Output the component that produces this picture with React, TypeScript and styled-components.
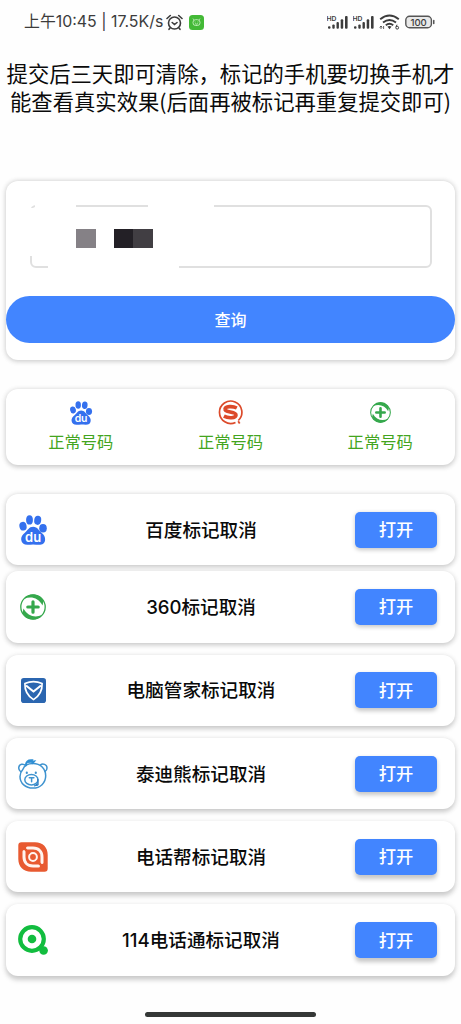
import React from "react";
import styled, { createGlobalStyle } from "styled-components";

const Global = createGlobalStyle`
  * { box-sizing: border-box; }
  body { margin: 0; background: #fefefe; }
  button { font: inherit; border: 0; margin: 0; padding: 0; }
  svg { display: block; flex: none; }
`;

const Page = styled.div`
  height: 1024px;
  display: flex;
  flex-direction: column;
  align-items: stretch;
  padding: 0 6px;
  overflow: hidden;
  background: #fefefe;
  color: #0a0a0a;
  font-family: "Noto Sans CJK SC", sans-serif;
`;

const StatusBar = styled.header`
  height: 44px;
  flex: none;
  display: flex;
  align-items: center;
  padding: 0 20px 0 18px;
  color: #3c3c3c;
`;

const Clock = styled.span`
  width: 142px;
  font-family: Inter, "Noto Sans CJK SC", sans-serif;
  font-size: 15.9px;
  line-height: 20px;
  white-space: nowrap;
`;

const StatusIcons = styled.div`
  display: flex;
  align-items: center;
  gap: 5px;
  margin-left: auto;
`;

const Notice = styled.p`
  flex: none;
  height: 137px;
  margin: 0 -6px;
  padding-top: 15px;
  text-align: center;
  font-size: 21.33px;
  line-height: 27.5px;
  white-space: nowrap;
`;

const Card = styled.section<{ $depth: number }>`
  flex: none;
  background: #fff;
  border-radius: 12px;
  box-shadow: 0 ${(p) => p.$depth}px 5px rgba(0, 0, 0, 0.17), 0 1px 6px rgba(0, 0, 0, 0.08);
`;

const QueryCard = styled(Card)`
  height: 179px;
  padding-top: 24px;
  margin-bottom: 29px;
`;

const NumberField = styled.div`
  position: relative;
  height: 63px;
  margin: 0 23px 28px 24px;
  border: 2px solid #e0e0e0;
  border-radius: 6px;
`;

const Patch = styled.i<{ $x: number; $y: number; $w: number; $h: number; $color?: string }>`
  position: absolute;
  left: ${(p) => p.$x}px;
  top: ${(p) => p.$y}px;
  width: ${(p) => p.$w}px;
  height: ${(p) => p.$h}px;
  background: ${(p) => p.$color ?? "#fff"};
`;

const QueryButton = styled.button`
  display: block;
  width: 100%;
  height: 47px;
  padding-bottom: 2px;
  border-radius: 24px;
  background: #4285ff;
  color: #fff;
  font-size: 16px;
  font-weight: 500;
`;

const ResultCard = styled(Card)`
  height: 76px;
  display: grid;
  grid-template-columns: repeat(3, 1fr);
  margin-bottom: 29px;
`;

const Result = styled.div`
  display: flex;
  flex-direction: column;
  align-items: center;
  padding-top: 11px;
  color: #43a520;
  font-size: 16.3px;
  line-height: 24px;
  gap: 4px;
`;

const List = styled.main`
  display: flex;
  flex-direction: column;
  gap: 12px;
`;

const Row = styled(Card)<{ $tight?: boolean }>`
  height: 71.3px;
  display: grid;
  grid-template-columns: 54px 1fr 82px;
  align-items: center;
  padding-right: 18px;
  margin-bottom: ${(p) => (p.$tight ? "-6px" : "0")};
`;

const IconCell = styled.div`
  display: flex;
  justify-content: center;
`;

const RowTitle = styled.span`
  padding-right: 13px;
  text-align: center;
  font-family: Inter, "Noto Sans CJK SC", sans-serif;
  font-size: 18.6px;
  font-weight: 500;
  line-height: 28px;
  white-space: nowrap;
`;

const OpenButton = styled.button<{ $depth: number }>`
  height: 36px;
  padding-bottom: 2px;
  border-radius: 5px;
  background: #4285ff;
  color: #fff;
  font-size: 17.3px;
  font-weight: 500;
  box-shadow: 0 ${(p) => p.$depth}px 4px rgba(0, 0, 0, 0.22);
`;

const HomeBar = styled.div`
  flex: none;
  width: 171px;
  height: 5px;
  margin: 36.5px auto 0;
  border-radius: 3px;
  background: #353837;
`;

const AlarmIcon = () => (
  <svg width="17" height="17" viewBox="0 0 17 17" fill="none" stroke="#3c3c3c" strokeWidth="1.6" strokeLinecap="round">
    <circle cx="8.5" cy="9" r="6" />
    <path d="M1 4.5 4.3 1.5M16 4.5 12.7 1.5M6.2 8.5l2.3 2 2.5-2M4 14l-1 1.3M13 14l1 1.3" />
  </svg>
);

const BadgeIcon = styled.svg`
  margin-left: 6px;
`;

const AppBadge = () => (
  <BadgeIcon width="15" height="15" viewBox="0 0 15 15">
    <rect width="15" height="15" rx="3.5" fill="#43b936" />
    <g fill="none" stroke="#c6efbe" strokeWidth="0.9">
      <rect x="4" y="4.7" width="7" height="5.8" rx="2.6" />
      <path d="M4.8 4.8 4 3.6M10.2 4.8l.8-1.2M5.7 7h.8M8.5 7h.8M6 8.7q1.5 1 3 0" />
    </g>
  </BadgeIcon>
);

const Signal = () => (
  <svg width="21" height="15" viewBox="0 0 21 15" fill="#3c3c3c">
    <text x="-0.5" y="5.5" fontSize="6.8" fontFamily="Inter, sans-serif" fontWeight="600">HD</text>
    <rect x="1" y="11.2" width="2.5" height="2.6" rx="1" />
    <rect x="5.3" y="9.4" width="2.4" height="4.4" rx="1" />
    <rect x="9.5" y="7" width="2.4" height="6.8" rx="1" />
    <rect x="13.7" y="4.2" width="2.5" height="9.6" rx="1" />
    <rect x="18" y="1" width="2.6" height="12.8" rx="1" />
  </svg>
);

const Wifi = () => (
  <svg width="21" height="16" viewBox="0 0 21 16" fill="none" stroke="#3c3c3c" strokeWidth="1.9">
    <path d="M1.2 5.2Q10.5-2.2 19.8 5.2M4 8.4q6.5-5 13 0M6.8 11.3q3.7-2.9 7.4 0" />
    <path d="m8.4 12.6 2.1 2.6 2.1-2.6q-2.1-1.3-4.2 0z" fill="#3c3c3c" stroke="none" />
    <path d="M2 12v3M.7 13.5 2 12l1.2 1.5M4.6 12v3" strokeWidth="0.8" />
    <circle cx="18.2" cy="13.7" r="1.4" strokeWidth="1" />
    <path d="m17 13 1-2.3" strokeWidth="1" />
  </svg>
);

const Battery = () => (
  <svg width="30" height="14" viewBox="0 0 30 14">
    <rect x="0.8" y="1.3" width="25.6" height="11.4" rx="3.8" fill="#e9e9e9" stroke="#555" strokeWidth="1.4" />
    <rect x="28" y="4.8" width="1.5" height="4.4" rx="0.7" fill="#555" />
    <text x="13.6" y="10.7" textAnchor="middle" fontSize="9.6" fontFamily="Inter, sans-serif" fontWeight="500" fill="#3c3c3c">100</text>
  </svg>
);

const BaiduIcon = ({ size }: { size: number }) => (
  <svg width={size} height={size} viewBox="0 0 30 30">
    <g fill="#3470ee">
      <ellipse cx="5" cy="11.2" rx="3.6" ry="4.4" transform="rotate(-12 5 11.2)" />
      <ellipse cx="11.5" cy="4.9" rx="3.4" ry="4.7" />
      <ellipse cx="19.7" cy="5.3" rx="3.5" ry="4.6" transform="rotate(8 19.7 5.3)" />
      <ellipse cx="25" cy="13.2" rx="3.8" ry="4.3" />
      <path d="M15.2 11.8c4.4 0 5.6 3.8 8.3 6 2.6 2.1 3.9 4.3 3.6 7.2-.4 3.600-2.600 4.700-6.100 4.700-2 0-3.700-.3-5.900-.3s-3.800.4-5.700.3c-3.600-.1-5.800-1.600-6.200-5-.3-2.900 1.200-4.800 3.700-6.900 2.900-2.300 3.900-6 8.300-6z" />
    </g>
    <text x="15.1" y="26.7" textAnchor="middle" fill="#fff" fontSize="13" fontWeight="600" fontFamily="Inter, sans-serif">du</text>
  </svg>
);

const SogouIcon = () => (
  <svg width="25" height="25" viewBox="0 0 25 25" fill="none" stroke="#dc4a2a">
    <path d="M20.3 20.5A11.2 11.2 0 1 0 17.5 22.4" strokeWidth="1.7" />
    <path d="M18.8 8C14.5 5.8 7.3 6.2 7 9.200c-.5 3.400 11.300 2.200 11 5.800-.3 3.300-7.500 3.600-12.100 1.200" strokeWidth="3.6" />
    <path d="m20.2 21.3 1.5 2.2" strokeWidth="1.8" />
  </svg>
);

const SafeIcon = ({ size }: { size: number }) => (
  <svg width={size} height={size} viewBox="0 0 26 26">
    <circle cx="13" cy="13" r="12.2" fill="none" stroke="#35a84c" strokeWidth="1.3" />
    <g fill="#35a84c">
      <path d="M4 5C8-1 19-1.500 23.500 7L22.500 11.500C18.500 4 11 1.800 4 5z" />
      <path d="M4 5C8-1 19-1.500 23.500 7L22.500 11.500C18.500 4 11 1.800 4 5z" transform="rotate(180 13 13)" />
    </g>
    <path d="M13 7.800v10.400M7.800 13h10.400" stroke="#35a84c" strokeWidth="3.2" strokeLinecap="round" />
  </svg>
);

const ShieldIcon = () => (
  <svg width="25" height="25" viewBox="0 0 25 25">
    <rect width="25" height="25" rx="2.8" fill="#2b66b0" />
    <g fill="none" stroke="#fff" strokeWidth="1.7" strokeLinejoin="round">
      <path d="M3.900 5.500Q12.500 1.800 21.100 5.500 21.500 16 12.500 21.600 3.500 16 3.900 5.500z" />
      <path d="m5 7.500 7.500 6 7.500-6" strokeWidth="2.2" />
    </g>
  </svg>
);

const BearIcon = () => (
  <svg width="30" height="30" viewBox="0 0 30 30" fill="none" stroke="#3f93cf" strokeWidth="1.5" strokeLinecap="round">
    <path d="M2.500 12.500C-.2 10.500.3 5.800 3.600 5.300 5.500 5 6.700 5.600 7.800 6.800M22.500 5.800c2.200-1.600 6.400-.6 6.500 2.900.1 1.700-.6 3-2 3.800" />
    <path d="M4.800 10.500C6.200 7 10 4.600 15 4.600c7.500 0 12.700 5.200 12.700 12.200 0 7.300-5.500 12.300-12.800 12.300S2 24.300 2 17.400c0-2.700.9-4.900 2.800-6.900z" />
    <path d="M8 6C8 3 10 1 13.500 1.200l-1.500 1.600 4-.4-1.500 1.800" stroke="#2f8fd4" strokeWidth="2" />
    <ellipse cx="13.4" cy="20.7" rx="6.6" ry="5.2" />
    <path d="M11.300 18.800h4.600M13.600 18.800v4" />
    <path d="M19.800 20.500v4.200l-3.500 2.200 3.500-.7z" fill="#2f7fc4" stroke="#2f7fc4" strokeWidth="1" />
    <path d="M8.800 13.700v.2M17.800 13.700v.2" strokeWidth="2.2" />
  </svg>
);

const PhoneHelpIcon = () => (
  <svg width="30" height="30" viewBox="0 0 30 30" fill="none">
    <path d="M3.500.3H17C25 .3 29.700 5.500 29.700 13v13.500a3.200 3.200 0 0 1-3.200 3.200H13C5.500 29.700.3 25 .3 17V3.500A3.200 3.200 0 0 1 3.500.3z" fill="#e85a31" />
    <path d="M9.500 6h5.500c5.500 0 9 3.500 9 9v5.500M20.500 24H15c-5.500 0-9-3.500-9-9V9.500" stroke="#fff4ef" strokeWidth="3" strokeLinecap="round" />
    <circle cx="15" cy="15" r="3.900" stroke="#fff4ef" strokeWidth="2" />
    <path d="m6 6 5.500 5.500M18.500 18.500 24 24" stroke="#e85a31" strokeWidth="2" />
  </svg>
);

const DirectoryIcon = () => (
  <svg width="30" height="30" viewBox="0 0 30 30">
    <circle cx="14" cy="14" r="11.8" fill="none" stroke="#12bd3f" strokeWidth="4.2" />
    <circle cx="14" cy="14" r="4.3" fill="#12bd3f" />
    <circle cx="25.6" cy="25.5" r="4.3" fill="#12bd3f" />
  </svg>
);

const rows = [
  { title: "百度标记取消", icon: <BaiduIcon size={30} />, depth: 1.5 },
  { title: "360标记取消", icon: <SafeIcon size={26} />, depth: 2 },
  { title: "电脑管家标记取消", icon: <ShieldIcon />, depth: 2.4 },
  { title: "泰迪熊标记取消", icon: <BearIcon />, depth: 2.8 },
  { title: "电话帮标记取消", icon: <PhoneHelpIcon />, depth: 3.2 },
  { title: "114电话通标记取消", icon: <DirectoryIcon />, depth: 3.6 },
];

const results = [<BaiduIcon size={24} />, <SogouIcon />, <SafeIcon size={21} />];

const ResultIcon = styled.div`
  height: 25px;
  display: flex;
  align-items: center;
`;

export default function App() {
  return (
    <Page>
      <Global />
      <StatusBar>
        <Clock>上午10:45 | 17.5K/s</Clock>
        <AlarmIcon />
        <AppBadge />
        <StatusIcons>
          <Signal />
          <Signal />
          <Wifi />
          <Battery />
        </StatusIcons>
      </StatusBar>
      <Notice>
        提交后三天即可清除，标记的手机要切换手机才
        <br />
        能查看真实效果(后面再被标记再重复提交即可)
      </Notice>
      <QueryCard $depth={0.8}>
        <NumberField>
          <Patch $x={3} $y={-3} $w={41} $h={6} />
          <Patch $x={116} $y={-3} $w={66} $h={6} />
          <Patch $x={-3} $y={1} $w={5} $h={48} />
          <Patch $x={16} $y={56} $w={131} $h={6} />
          <Patch $x={44} $y={22} $w={20} $h={19} $color="#858186" />
          <Patch $x={82} $y={22} $w={20} $h={19} $color="#232026" />
          <Patch $x={101} $y={22} $w={20} $h={19} $color="#413e43" />
        </NumberField>
        <QueryButton>查询</QueryButton>
      </QueryCard>
      <ResultCard $depth={1.2}>
        {results.map((icon, i) => (
          <Result key={i}>
            <ResultIcon>{icon}</ResultIcon>
            正常号码
          </Result>
        ))}
      </ResultCard>
      <List>
        {rows.map((row, i) => (
          <Row key={row.title} $depth={row.depth} $tight={i === 0}>
            <IconCell>{row.icon}</IconCell>
            <RowTitle>{row.title}</RowTitle>
            <OpenButton $depth={row.depth}>打开</OpenButton>
          </Row>
        ))}
      </List>
      <HomeBar />
    </Page>
  );
}
